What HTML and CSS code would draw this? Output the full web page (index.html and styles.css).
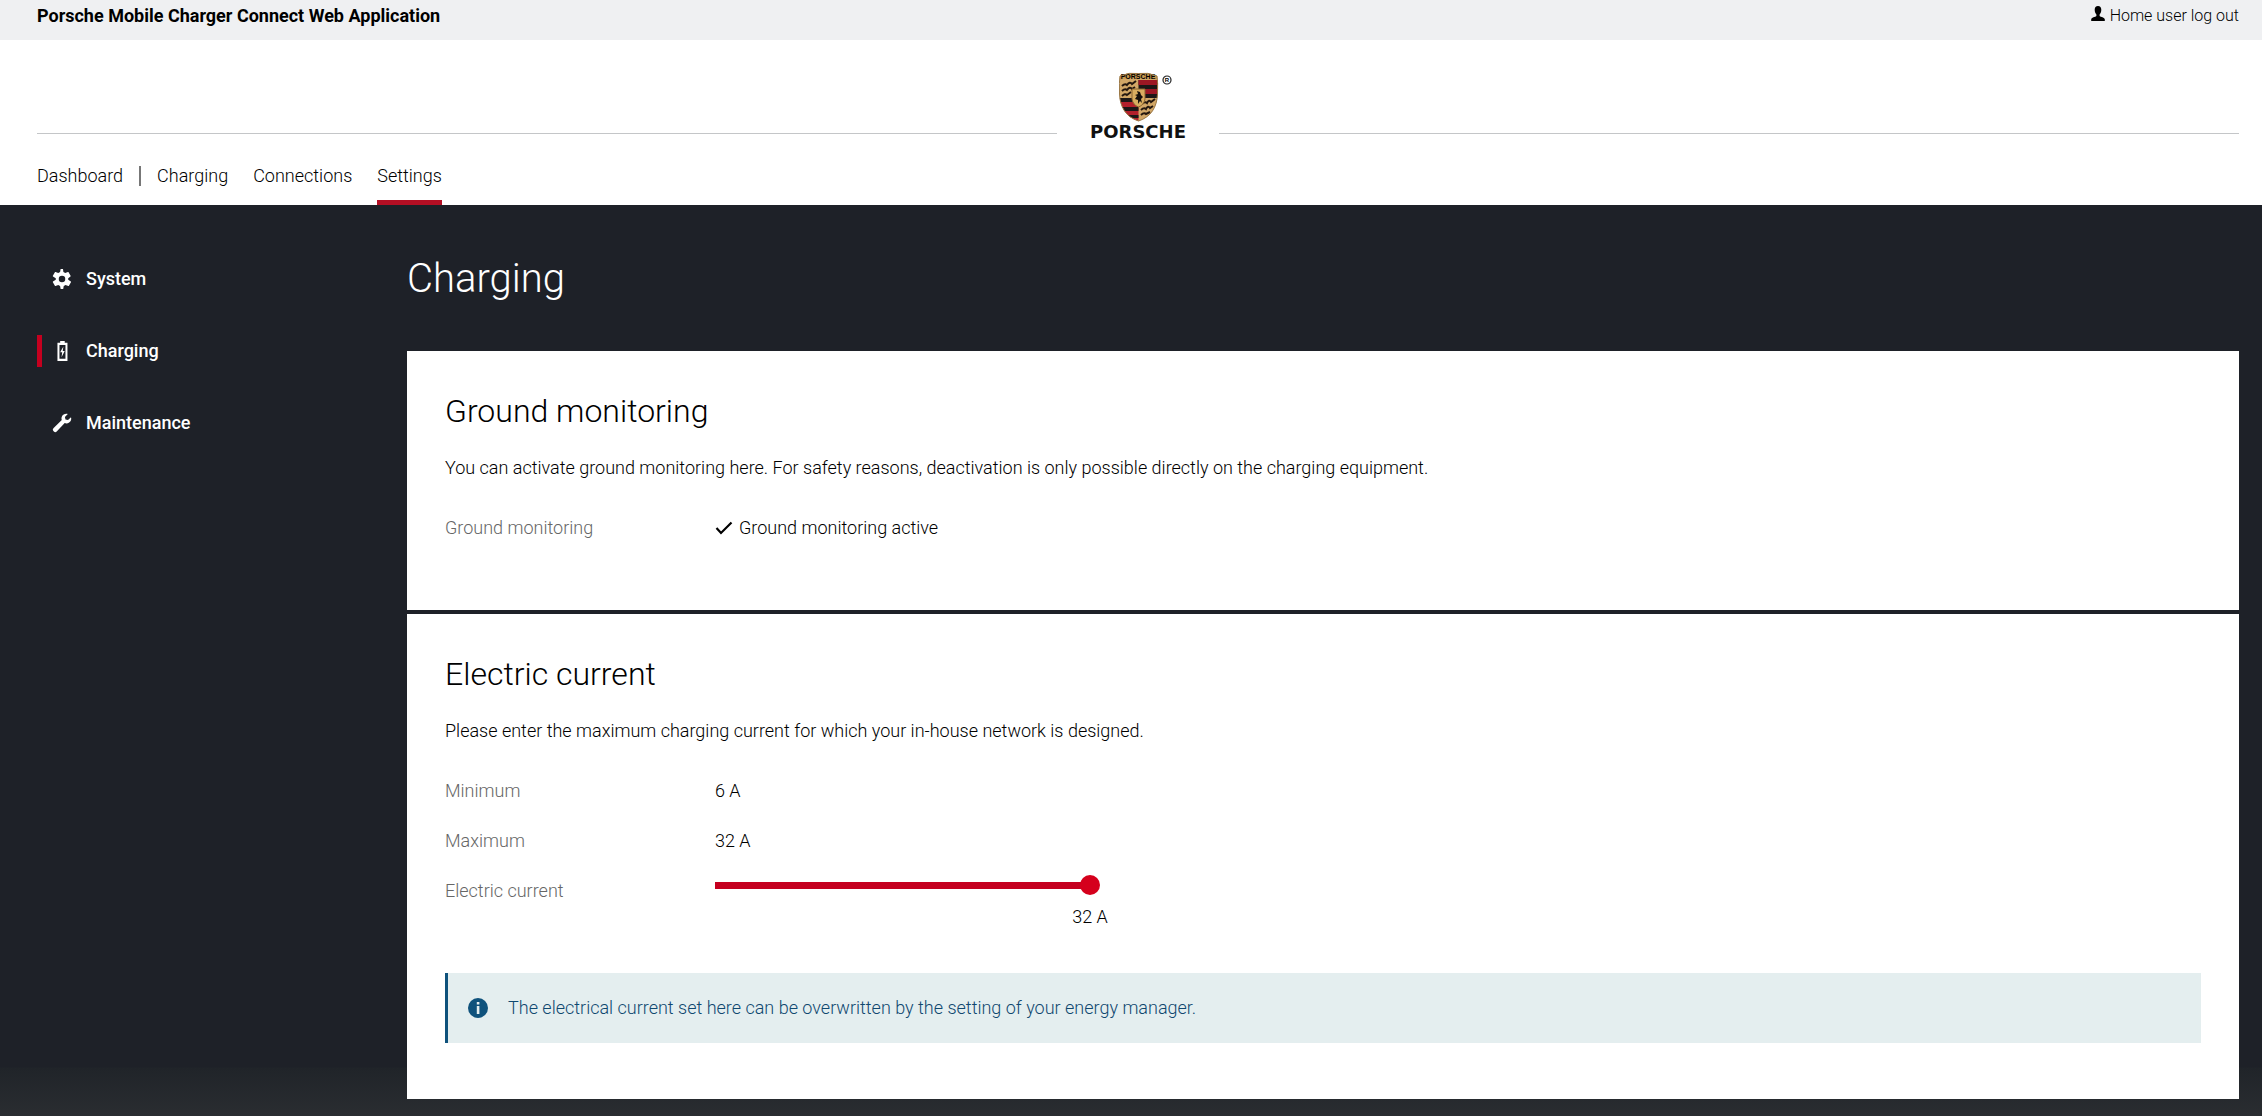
FILE: index.html
```html
<!DOCTYPE html>
<html lang="en">
<head>
<meta charset="utf-8">
<meta name="viewport" content="width=device-width, initial-scale=1">
<title>Porsche Mobile Charger Connect Web Application</title>
<link rel="stylesheet" href="styles.css">
</head>
<body>
<div class="topbar">
  <strong class="app-title">Porsche Mobile Charger Connect Web Application</strong>
  <a class="logout" href="#logout">
    <svg class="user-icon" viewBox="0 0 14 15" aria-hidden="true"><path d="M7 0C4.800 0 3.700 1.600 3.700 3.700c0 2 .7 3.800 1.700 4.700v1.500C4 11 .6 11.200.2 13.200V15h13.600v-1.800c-.4-2-3.800-2.200-5.200-3.300V8.400c1-.9 1.700-2.700 1.700-4.700C10.300 1.600 9.200 0 7 0z"/></svg>
    Home user log out
  </a>
</div>
<header class="header">
  <div class="brand-row">
    <span class="rule"></span>
    <a class="brand" href="#home" aria-label="Porsche">
      <svg class="crest" viewBox="0 0 54 50" aria-hidden="true">
        <defs><clipPath id="shield"><path d="M1 4Q10 0 19.500 1.500Q29 0 38 4Q39 10 38.500 22C38 35 32 45 19.500 49C7 45 1 35 .5 22Q0 10 1 4z"/></clipPath></defs>
        <g clip-path="url(#shield)">
          <rect width="40" height="50" fill="#d2a767"/>
          <path d="M0 0h40v7.500Q20 4 0 7.500z" fill="#c8984f"/>
          <path d="M19.500 8H40v18H19.500z" fill="#1d1717"/>
          <path d="M19.500 8H40v5H19.500zM19.500 17H40v5H19.500z" fill="#9c1724"/>
          <path d="M0 26h19.500v24H0z" fill="#b3202b"/>
          <path d="M0 26h19.500v4H0zM0 35h19.500v4H0zM5 43h14.500v3H5z" fill="#1d1717"/>
          <path d="M3 14q3-3 5-1 3-4 5-1l4-3M3 19q3-3 5-1 3-4 5-1l3-2M3 24q3-3 5-1l4-3M23 32q3-3 5-1 2-4 4-1l4-3M22 38q3-3 5-1 2-4 4-1l3-2M22 43q3-3 5-1l4-2" fill="none" stroke="#24170f" stroke-width="2"/>
          <path d="M13 17h13v10q-1 6-6.500 8Q14 33 13 27z" fill="#d9ad60" stroke="#8a6531"/>
          <path d="M18 19l3 1 1 3 2 2-2 2 1 4-2-2-2 3 0-4-3-1 2-3-2-1 3-1z" fill="#17110d"/>
        </g>
        <text class="crest-text" x="19" y="7" text-anchor="middle">PORSCHE</text>
        <path d="M1 4Q10 0 19.500 1.500Q29 0 38 4Q39 10 38.500 22C38 35 32 45 19.500 49C7 45 1 35 .5 22Q0 10 1 4z" fill="none" stroke="#9a7745"/>
        <circle cx="48" cy="8" r="4" fill="none" stroke="#222" stroke-width="1.200"/>
        <text class="registered" x="48" y="10" text-anchor="middle">R</text>
      </svg>
      <span class="wordmark">PORSCHE</span>
    </a>
    <span class="rule"></span>
  </div>
  <nav class="nav" aria-label="Main">
    <a class="nav-link nav-first" href="#dashboard">Dashboard</a>
    <a class="nav-link" href="#charging">Charging</a>
    <a class="nav-link" href="#connections">Connections</a>
    <a class="nav-link nav-active" href="#settings" aria-current="page">Settings</a>
  </nav>
</header>
<div class="page">
  <nav class="sidebar" aria-label="Settings">
    <a class="side-link" href="#system">
      <svg class="side-icon" viewBox="0 0 24 24" aria-hidden="true"><path d="M19.430 12.980c.04-.32.07-.64.07-.98s-.03-.66-.07-.98l2.750-2.150c.2-.15.25-.42.120-.64l-2.600-4.500c-.12-.22-.39-.3-.61-.22l-3.240 1.300c-.67-.51-1.400-.94-2.200-1.270L13.200.100C13.160-.150 12.950-.300 12.700-.300h-1.400c-.9 0-.9.200-1 .5l-.6 3.300c-.8.330-1.500.76-2.200 1.270L4.260 3.510c-.23-.09-.49 0-.61.220l-2.600 4.500c-.13.220-.07.490.12.640l3.400 2.150c-.04.320-.07.650-.07.980s.03.660.070.980l-3.400 2.150c-.19.150-.24.420-.12.640l2.600 4.500c.12.220.39.300.61.220l3.240-1.300c.67.510 1.400.940 2.200 1.270l.6 3.300c.05.250.26.500.5.500h2.200c.25 0 .46-.2.500-.5l.6-3.300c.8-.33 1.530-.76 2.200-1.270l3.240 1.300c.23.090.49 0 .61-.22l2.600-4.500c.12-.22.070-.49-.12-.64zM12 15.900a3.900 3.900 0 1 1 0-7.800 3.900 3.900 0 0 1 0 7.800z"/></svg>
      System
    </a>
    <a class="side-link side-active" href="#charging-settings" aria-current="page">
      <svg class="side-icon" viewBox="0 0 20 22" aria-hidden="true"><path fill-rule="evenodd" d="M8 0h5v2h3v20H5V2h3zM7.200 4.500v15h6.600v-15z"/><path d="M11.500 6L8 12.500h2.200L9.500 18l3.500-7h-2.200z"/></svg>
      Charging
    </a>
    <a class="side-link" href="#maintenance">
      <svg class="side-icon" viewBox="0 0 20 20" aria-hidden="true"><path d="M19 4.300l-3 2.700-2.500-.6-.6-2.500L15.800.9C13.500.2 10.900 1.200 9.900 3.500c-.6 1.300-.5 2.500-.1 3.600L1.400 15.300a2 2 0 0 0 0 2.800l.5.500a2 2 0 0 0 2.800 0l8-8.500c1.300.5 3 .5 4.400-.5 1.900-1.200 2.600-3.400 1.900-5.300z"/></svg>
      Maintenance
    </a>
  </nav>
  <main class="main">
    <h1 class="title">Charging</h1>
    <section class="card card-short">
      <h2 class="card-title">Ground monitoring</h2>
      <p class="lead">You can activate ground monitoring here. For safety reasons, deactivation is only possible directly on the charging equipment.</p>
      <dl class="row">
        <dt class="label">Ground monitoring</dt>
        <dd class="value"><svg class="check" viewBox="0 0 18 14" aria-hidden="true"><path d="M1.500 7l4.500 5L16.500 1.500" fill="none" stroke="#000" stroke-width="2.200"/></svg>Ground monitoring active</dd>
      </dl>
    </section>
    <section class="card">
      <h2 class="card-title">Electric current</h2>
      <p class="lead">Please enter the maximum charging current for which your in-house network is designed.</p>
      <dl class="row">
        <dt class="label">Minimum</dt>
        <dd class="value">6 A</dd>
      </dl>
      <dl class="row">
        <dt class="label">Maximum</dt>
        <dd class="value">32 A</dd>
      </dl>
      <div class="row">
        <label class="label" for="current">Electric current</label>
        <div class="slider-field">
          <input class="slider" id="current" type="range" min="6" max="32" value="32">
          <output class="slider-value" for="current">32 A</output>
        </div>
      </div>
      <div class="notice" role="note">
        <svg class="info-icon" viewBox="0 0 20 20" aria-hidden="true"><circle cx="10" cy="10" r="10" fill="#0f527c"/><path d="M8.800 4h2.600v2.500H8.800zM8.800 8h2.600v8H8.800z" fill="#e4eeef"/></svg>
        The electrical current set here can be overwritten by the setting of your energy manager.
      </div>
    </section>
  </main>
</div>
</body>
</html>
```
FILE: styles.css
```css
* { box-sizing: border-box; }

body {
  margin: 0;
  min-height: 100vh;
  display: flex;
  flex-direction: column;
  background: #fff;
  color: #000;
  font-family: "Roboto", sans-serif;
  font-size: 18px;
  font-weight: 300;
  line-height: 24px;
}

h1, h2, p, dl, dd { margin: 0; }

a { color: inherit; text-decoration: none; }

.topbar {
  display: flex;
  justify-content: space-between;
  padding: 4px 23px 12px 37px;
  background: #eff0f2;
}

.app-title { font-weight: 700; }

.logout { display: flex; align-items: flex-start; gap: 5px; font-size: 16px; }

.user-icon { width: 14px; height: 15px; margin-top: 2px; fill: #000; }

.header { padding: 32px 23px 0 37px; }

.brand-row {
  display: grid;
  grid-template-columns: 1fr 162px 1fr;
  align-items: end;
}

.rule { height: 1px; margin-bottom: 6px; background: #c4c6c8; }

.brand { display: flex; flex-direction: column; align-items: center; }

.crest { width: 54px; height: 50px; margin-left: 16px; }

.crest-text { font: 700 7px "Liberation Sans", sans-serif; }

.registered { font: 700 6px "Liberation Sans", sans-serif; }

.wordmark {
  margin-top: 2px;
  font: 700 18px/16px "DejaVu Sans", sans-serif;
  color: #111;
}

.nav { display: flex; gap: 25px; padding-top: 24px; }

.nav-link { padding: 0 0 12px; border-bottom: 5px solid transparent; }

.nav-first { display: flex; align-items: center; gap: 16px; margin-right: -9px; }

.nav-first::after { content: ""; width: 2px; height: 20px; background: #777; }

.nav-active { border-color: #b40f24; }

.page {
  flex: 1;
  display: grid;
  grid-template-columns: 370px 1fr;
  padding: 50px 23px 16px 37px;
  background: linear-gradient(to top, #2a2d31, #202429 48px, #1e2128 49px);
}

.sidebar {
  display: flex;
  flex-direction: column;
  gap: 40px;
  padding-top: 8px;
  color: #fff;
  font-weight: 500;
}

.side-link {
  display: flex;
  align-items: center;
  gap: 14px;
  height: 32px;
  padding-left: 10px;
  border-left: 5px solid transparent;
}

.side-active { border-color: #c5001f; }

.side-icon { width: 20px; height: 20px; fill: #fff; }

.title {
  padding-bottom: 48px;
  color: #fff;
  font-size: 40px;
  font-weight: 300;
  line-height: 48px;
}

.card { padding: 40px 38px 56px; background: #fff; }

.card-short { padding-bottom: 44px; }

.card + .card { margin-top: 4px; }

.card-title {
  padding-bottom: 25px;
  font-size: 32px;
  font-weight: 300;
  line-height: 40px;
}

.lead { padding-bottom: 36px; }

.row { display: grid; grid-template-columns: 270px 1fr; min-height: 50px; }

.label { color: #666; }

.value { display: flex; align-items: center; height: 24px; }

.check { width: 18px; height: 14px; margin-right: 6px; }

.slider-field { display: flex; flex-direction: column; gap: 10px; width: 385px; }

.slider {
  appearance: none;
  width: 385px;
  height: 20px;
  margin: -4px 0 0;
  background: linear-gradient(#c5001f, #c5001f) left center / 375px 7px no-repeat;
}

.slider::-webkit-slider-thumb {
  appearance: none;
  width: 20px;
  height: 20px;
  border-radius: 50%;
  background: #d5001c;
}

.slider-value { align-self: flex-end; width: 20px; display: flex; justify-content: center; white-space: nowrap; }

.notice {
  display: flex;
  align-items: center;
  gap: 20px;
  min-height: 70px;
  margin-top: 44px;
  padding: 0 20px;
  border-left: 3px solid #0f527c;
  background: #e4eeef;
  color: #0f486f;
}

.info-icon { width: 20px; height: 20px; }
```
